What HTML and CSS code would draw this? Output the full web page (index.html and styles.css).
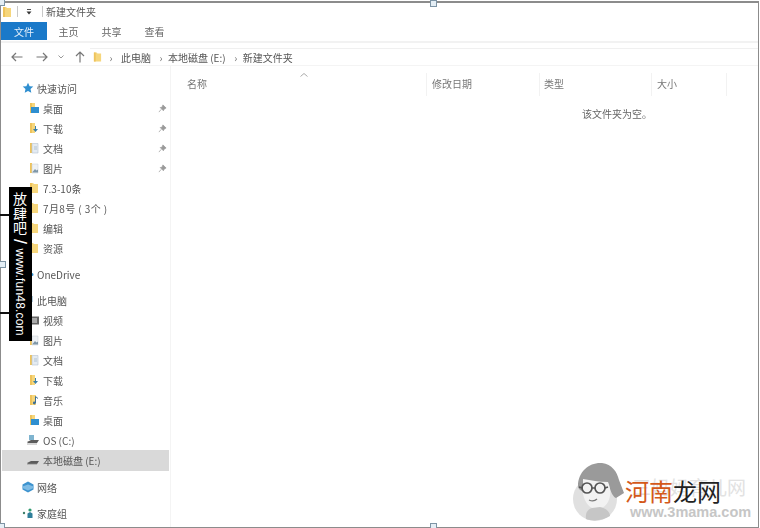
FILE: index.html
```html
<!DOCTYPE html>
<html lang="zh-CN">
<head>
  <meta charset="UTF-8" />
  <title>新建文件夹</title>
  <link rel="stylesheet" href="styles.css">
</head>
<body>

  <svg class="defs" width="0" height="0">
    <symbol id="folder" viewBox="0 0 10 12">
      <path d="M1 1h3l1 1h4v9H1z" fill="#f6d67c"/>
      <path d="M1 1h2v10H1z" fill="#eec35c"/>
    </symbol>
    <symbol id="pin" viewBox="0 0 10 10">
      <path d="M5.5 1l3.5 3.500-1 .5-1.500 1-.5 1.500L2.500 4 4 3.500 5 2.500zM3.500 6L1 9" fill="#9a9a9a" stroke="#9a9a9a" stroke-width=".8"/>
    </symbol>
    <symbol id="f-desk" viewBox="0 0 10 12">
      <path d="M1 1h2v10H1z" fill="#eec35c"/>
      <path d="M3 1h3v4H3z" fill="#f6d67c"/>
      <path d="M2 5h8v6H2z" fill="#2f8fd0"/>
    </symbol>
    <symbol id="f-down" viewBox="0 0 10 12">
      <path d="M1 1h2v10H1z" fill="#eec35c"/>
      <path d="M3 1h3v10H3z" fill="#f6d67c"/>
      <path d="M7 4v3h2L6.500 10 4 7h2V4z" fill="#3b7fa8"/>
    </symbol>
    <symbol id="f-doc" viewBox="0 0 10 12">
      <path d="M1 1h2v10H1z" fill="#eec35c"/>
      <path d="M3 1.500h6v9.500H3z" fill="#e4ebf2" stroke="#b5c3d0" stroke-width=".6"/>
      <path d="M5 5h3M5 7h3" stroke="#9fb2c4" stroke-width=".7"/>
    </symbol>
    <symbol id="f-pic" viewBox="0 0 10 12">
      <path d="M1 1h2v10H1z" fill="#eec35c"/>
      <path d="M3 2h6v9H3z" fill="#eef1f4" stroke="#c4cdd6" stroke-width=".5"/>
      <path d="M3.500 10L6 7l1.500 1.500L9 7.500V10.500H3.500z" fill="#7f97a8"/>
    </symbol>
    <symbol id="f-music" viewBox="0 0 10 12">
      <path d="M1 1h2v10H1z" fill="#eec35c"/>
      <path d="M3 1h4v10H3z" fill="#f6d67c"/>
      <path d="M6.500 2.500v6.500" stroke="#3d6f94" stroke-width="1"/>
      <path d="M6.500 2.500l2.500 2" stroke="#3d6f94" stroke-width="1" fill="none"/>
      <circle cx="5.300" cy="9" r="1.400" fill="#3d6f94"/>
    </symbol>
    <symbol id="drive" viewBox="0 0 14 10">
      <path d="M1 7l4-2h8l-2 3H2z" fill="#5c5c5c"/>
      <path d="M1 8.200h10" stroke="#9b9b9b" stroke-width=".8"/>
    </symbol>
  </svg>

  <div class="window">

    <div class="titlebar">
      <svg class="t-folder"><use href="#folder"/></svg>
      <span class="t-sep"></span>
      <svg class="t-drop" viewBox="0 0 8 8"><path d="M2 1.500h4" stroke="#555" stroke-width="1"/><path d="M1.500 3.500h5L4 6.500z" fill="#333"/></svg>
      <span class="t-sep"></span>
      <span class="t-name">新建文件夹</span>
    </div>

    <div class="tabs">
      <span class="tab tab-file">文件</span>
      <span class="tab">主页</span>
      <span class="tab">共享</span>
      <span class="tab">查看</span>
    </div>

    <div class="navbar">
      <svg class="nav-btn nav-back" viewBox="0 0 12 10"><path d="M11.500 5H1M5 1L1 5l4 4" fill="none" stroke="#777" stroke-width="1.200"/></svg>
      <svg class="nav-btn nav-fwd" viewBox="0 0 12 10"><path d="M.5 5H11M7 1l4 4-4 4" fill="none" stroke="#777" stroke-width="1.200"/></svg>
      <svg class="nav-btn nav-drop" viewBox="0 0 6 4"><path d="M.5 .5L3 3l2.500-2.500" fill="none" stroke="#999" stroke-width="1"/></svg>
      <svg class="nav-btn nav-up" viewBox="0 0 10 12"><path d="M5 11.500V1M1 5l4-4 4 4" fill="none" stroke="#777" stroke-width="1.200"/></svg>
      <div class="address">
        <svg class="addr-folder"><use href="#folder"/></svg>
        <span class="crumb-sep">›</span>
        <span>此电脑</span>
        <span class="crumb-sep">›</span>
        <span>本地磁盘 (E:)</span>
        <span class="crumb-sep">›</span>
        <span>新建文件夹</span>
      </div>
    </div>

    <div class="main">
      <nav class="sidebar">
        <div class="row top"><svg class="ico-top" viewBox="0 0 12 12"><path d="M6 .8l1.600 3.400 3.700.4-2.800 2.500.8 3.700L6 8.900l-3.300 1.900.8-3.700L.7 4.600l3.700-.4z" fill="#2f8fd0"/></svg><span>快速访问</span></div>
        <div class="row"><svg class="ico"><use href="#f-desk"/></svg><span>桌面</span><svg class="pin"><use href="#pin"/></svg></div>
        <div class="row"><svg class="ico"><use href="#f-down"/></svg><span>下载</span><svg class="pin"><use href="#pin"/></svg></div>
        <div class="row"><svg class="ico"><use href="#f-doc"/></svg><span>文档</span><svg class="pin"><use href="#pin"/></svg></div>
        <div class="row"><svg class="ico"><use href="#f-pic"/></svg><span>图片</span><svg class="pin"><use href="#pin"/></svg></div>
        <div class="row"><svg class="ico"><use href="#folder"/></svg><span>7.3-10条</span></div>
        <div class="row"><svg class="ico"><use href="#folder"/></svg><span class="spaced">7月8号 ( 3个 )</span></div>
        <div class="row"><svg class="ico"><use href="#folder"/></svg><span>编辑</span></div>
        <div class="row"><svg class="ico"><use href="#folder"/></svg><span>资源</span></div>

        <div class="row top group"><svg class="ico-top" viewBox="0 0 12 12"><path d="M2 8h8a1.500 1.500 0 0 0 0-3 3 3 0 0 0-6-.5A2 2 0 0 0 2 8z" fill="#2f8fd0"/></svg><span>OneDrive</span></div>

        <div class="row top group"><svg class="ico-top" viewBox="0 0 12 12"><path d="M2 2h8v6H2zM4 10h4" fill="#6f9fc0" stroke="#6f9fc0"/></svg><span>此电脑</span></div>
        <div class="row"><svg class="ico" viewBox="0 0 10 12"><path d="M1 2.500h9v8H1z" fill="#666"/><path d="M3 4h5v5H3z" fill="#aaa"/></svg><span>视频</span></div>
        <div class="row"><svg class="ico"><use href="#f-pic"/></svg><span>图片</span></div>
        <div class="row"><svg class="ico"><use href="#f-doc"/></svg><span>文档</span></div>
        <div class="row"><svg class="ico"><use href="#f-down"/></svg><span>下载</span></div>
        <div class="row"><svg class="ico"><use href="#f-music"/></svg><span>音乐</span></div>
        <div class="row"><svg class="ico"><use href="#f-desk"/></svg><span>桌面</span></div>
        <div class="row"><svg class="ico ico-drive" viewBox="0 0 14 12"><path d="M3 1h5v5H3z" fill="#7fb4cf"/><path d="M1 8l4-2h8l-2 3H2z" fill="#5c5c5c"/><path d="M1 10h10" stroke="#9b9b9b" stroke-width=".8"/></svg><span>OS (C:)</span></div>
        <div class="row selected"><svg class="ico ico-drive"><use href="#drive"/></svg><span>本地磁盘 (E:)</span></div>

        <div class="row top group"><svg class="ico-top" viewBox="0 0 12 12"><path d="M6 .5l5.500 3v5L6 11.500.5 8.500v-5z" fill="#3d93cf"/><path d="M.5 5.500L6 3.500l5.500 2v1.500L6 9.500.5 7z" fill="#7fbce5"/></svg><span>网络</span></div>
        <div class="row top group"><svg class="ico-top" viewBox="0 0 12 12"><circle cx="2" cy="6" r="1.200" fill="#3f7f6a"/><circle cx="8" cy="3" r="1.600" fill="#2f9a70"/><path d="M5.500 11V6.500L8 5l2.500 1.500V11z" fill="#2f7f9a"/></svg><span>家庭组</span></div>
      </nav>

      <section class="files">
        <div class="columns">
          <div class="col col-name">名称<svg class="sort" viewBox="0 0 8 4"><path d="M.5 3.500L4 .5l3.500 3" fill="none" stroke="#aaa" stroke-width="1"/></svg></div>
          <div class="col col-date">修改日期</div>
          <div class="col col-type">类型</div>
          <div class="col col-size">大小</div>
        </div>
        <p class="empty">该文件夹为空。</p>
      </section>
    </div>

    <!-- selection handles, the shot was taken in an editor -->
    <span class="handle h-top"></span>
    <span class="handle h-left"></span>
    <span class="handle h-bottom"></span>
    <span class="handle h-tl"></span>
    <span class="handle h-bl"></span>
  </div>

  <!-- side stamp -->
  <span class="stamp-line l1"></span>
  <span class="stamp-line l2"></span>
  <div class="stamp"><span class="stamp-cn">放肆吧</span><span class="stamp-slash">/</span><span class="stamp-url">www.fun48.com</span></div>

  <!-- corner logo -->
  <div class="logo">
    <svg class="logo-face" viewBox="0 0 52 60">
      <circle cx="22" cy="37" r="22" fill="#e0e0e0"/>
      <path d="M5 24C5 9 17 0 29 1c10 1 15 9 17 17l5 13-8 5c-3-1-5-6-7-12-6 0-14-3-22-4l-2 10c-4-1-7-3-7-6z" fill="#9a9a9a"/>
      <path d="M10 17c8 1 16 3 25 3 3 7 3 14 0 20-3 5-7 7-11 7-7 0-12-6-14-15z" fill="#f2f2f2"/>
      <g fill="none" stroke="#555" stroke-width="1.700">
        <circle cx="14" cy="26" r="5"/>
        <circle cx="27" cy="26" r="5"/>
        <path d="M19 26h3M9 26l-3-1M32 26l3-1"/>
      </g>
      <path d="M16 38c3 1.500 6 1 8-1" fill="none" stroke="#777" stroke-width="1.200"/>
      <path d="M13 57c-1-6 2-10 6-11l8-1c6 1 10 5 10 9-6 4-16 6-24 3z" fill="#c6c6c6"/>
    </svg>
    <div class="logo-faint">三妈妈育儿网</div>
    <div class="logo-name"><span class="orange">河南</span>龙网</div>
    <div class="logo-url">www.3mama.com</div>
  </div>

</body>
</html>
```

FILE: styles.css
```css
html, body {
  margin: 0;
  padding: 0;
  width: 760px;
  height: 528px;
  overflow: hidden;
  background: #fff;
  font-family: "Noto Sans CJK SC", "Liberation Sans", sans-serif;
  font-size: 10px;
  color: #555;
}

.defs {
  display: block;
}

.window {
  position: relative;
  box-sizing: border-box;
  width: 759px;
  height: 527px;
  margin-top: 1px;
  border-top: 2px solid #8c8c8c;
  border-left: 1px solid #8c8c8c;
  border-right: 1px solid #8c8c8c;
  border-bottom: 1px solid #8c8c8c;
  display: flex;
  flex-direction: column;
  filter: blur(0.45px);
}

/* title bar */
.titlebar {
  height: 17px;
  padding-bottom: 2px;
  display: flex;
  align-items: center;
  flex-shrink: 0;
}

.t-folder {
  width: 10px;
  height: 12px;
  margin-left: 1px;
}

.t-sep {
  width: 1px;
  height: 11px;
  background: #c8c8c8;
  margin-left: 5px;
}

.t-drop {
  width: 8px;
  height: 8px;
  margin-left: 7px;
  margin-right: 4px;
}

.t-name {
  padding-left: 3px;
  line-height: 14px;
}

/* ribbon tabs */
.tabs {
  height: 18px;
  display: flex;
  flex-shrink: 0;
  border-bottom: 2px solid #f2f2f2;
  padding-bottom: 1px;
}

.tab {
  padding: 0 11.5px;
  line-height: 20px;
  color: #666;
}

.tab-file {
  width: 20px;
  padding: 0 13px;
  background: #1a79c9;
  color: #e8f2fb;
}

/* back / forward and address */
.navbar {
  height: 23px;
  display: flex;
  align-items: center;
  flex-shrink: 0;
  box-sizing: border-box;
  padding-top: 5px;
  border-bottom: 1px solid #f4f4f4;
}

.nav-btn {
  flex-shrink: 0;
}

.nav-back {
  width: 12px;
  height: 10px;
  margin-left: 10px;
}

.nav-fwd {
  width: 12px;
  height: 10px;
  margin-left: 13px;
}

.nav-drop {
  width: 6px;
  height: 4px;
  margin-left: 10px;
}

.nav-up {
  width: 10px;
  height: 12px;
  margin-left: 11px;
}

.address {
  flex: 1;
  height: 16px;
  margin-left: 5px;
  display: flex;
  align-items: center;
  border-top: 1px solid #f0f0f0;
  color: #555;
}

.addr-folder {
  width: 9px;
  height: 12px;
  margin-left: 3px;
}

.crumb-sep {
  color: #777;
  width: 8px;
  text-align: center;
  margin: 0 3px 0 6px;
}

.addr-folder + .crumb-sep {
  margin-left: 5px;
  margin-right: 6px;
}

/* main area */
.main {
  flex: 1;
  display: flex;
  min-height: 0;
}

.sidebar {
  width: 169px;
  flex-shrink: 0;
  padding-top: 12px;
  border-right: 1px solid #f4f4f4;
}

.row {
  height: 20px;
  display: flex;
  align-items: center;
  padding-left: 28px;
  color: #555;
}

.row.top {
  padding-left: 21px;
}

.spaced {
  letter-spacing: 0.4px;
}

.group {
  margin-top: 6px;
}

.selected {
  background: #d9d9d9;
  margin: 0 1px;
  padding-left: 27px;
  height: 21px;
}

.ico {
  width: 10px;
  height: 12px;
  margin-right: 4px;
  flex-shrink: 0;
}

.ico-drive {
  width: 14px;
  height: 12px;
  margin-left: -3px;
  margin-right: 3px;
}

.ico-top {
  width: 12px;
  height: 12px;
  margin-right: 3px;
}

.pin {
  width: 9px;
  height: 9px;
  margin-left: auto;
  margin-right: 3px;
}

/* file list */
.files {
  flex: 1;
  padding-top: 7px;
}

.columns {
  display: grid;
  grid-template-columns: 256px 113px 112px 75px;
  height: 23px;
}

.col {
  position: relative;
  line-height: 22px;
  color: #777;
  border-right: 1px solid #f2f2f2;
}

.col-name {
  padding-left: 16px;
}

.col-date,
.col-size {
  padding-left: 5px;
}

.col-type {
  padding-left: 4px;
}

.sort {
  position: absolute;
  left: 129px;
  top: 0;
  width: 8px;
  height: 4px;
}

.empty {
  margin: 11px 0 0 411px;
  line-height: 14px;
  color: #666;
}

/* selection handles */
.handle {
  position: absolute;
  width: 5px;
  height: 5px;
  background: #e4eef5;
  border: 1px solid #7d94a5;
}

.h-top {
  left: 429px;
  top: -3px;
}

.h-left {
  left: -2px;
  top: 258px;
}

.h-bottom {
  left: 429px;
  bottom: -3px;
}

.h-tl {
  left: -3px;
  top: -4px;
}

.h-bl {
  left: -3px;
  bottom: -3px;
}

/* black stamp on the left */
.stamp {
  position: absolute;
  left: 9px;
  top: 187px;
  width: 23px;
  height: 154px;
  box-sizing: border-box;
  padding-top: 5px;
  background: #000;
  color: #fff;
  writing-mode: vertical-rl;
  line-height: 23px;
  white-space: nowrap;
}

.stamp-cn {
  font-size: 14px;
  letter-spacing: 0.5px;
}

.stamp-slash {
  font-family: "Liberation Sans", sans-serif;
  font-size: 18px;
  margin-block: 0;
  margin-inline: 3px 5px;
}

.stamp-url {
  font-family: "Liberation Sans", sans-serif;
  font-size: 12px;
  letter-spacing: 0.2px;
}

.stamp-line {
  position: absolute;
  left: 0;
  width: 9px;
  height: 2px;
  background: #111;
}

.l1 {
  top: 214px;
}

.l2 {
  top: 312px;
}

/* logo bottom right */
.logo {
  position: absolute;
  left: 573px;
  top: 462px;
  width: 182px;
  height: 60px;
}

.logo-face {
  position: absolute;
  left: 0;
  top: 0;
  width: 52px;
  height: 60px;
}

.logo-faint {
  position: absolute;
  left: 59px;
  top: 13px;
  font-size: 19px;
  line-height: 24px;
  color: #e2e2e2;
  white-space: nowrap;
}

.logo-name {
  position: absolute;
  left: 52px;
  top: 16px;
  font-size: 24px;
  line-height: 26px;
  color: #222;
  white-space: nowrap;
}

.orange {
  color: #d4591a;
}

.logo-url {
  position: absolute;
  left: 57px;
  top: 43px;
  font-family: "Liberation Sans", sans-serif;
  font-size: 14.5px;
  font-weight: bold;
  line-height: 15px;
  color: #c6c6c6;
  white-space: nowrap;
}
```
